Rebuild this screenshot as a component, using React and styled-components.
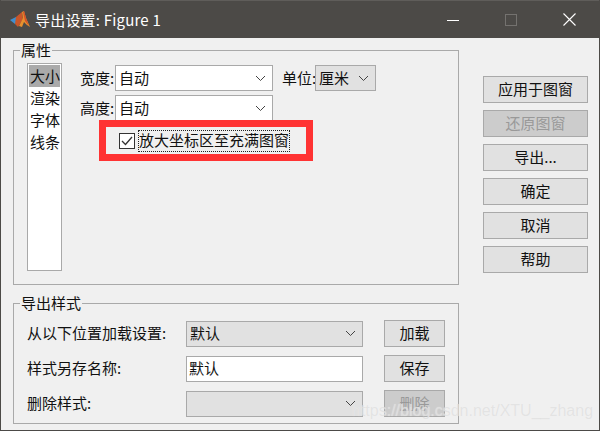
import React from "react";
import styled, { createGlobalStyle } from "styled-components";

const GlobalStyle = createGlobalStyle`
  html, body {
    margin: 0;
    padding: 0;
    background: #f0f0f0;
  }
  * {
    box-sizing: border-box;
  }
`;

const Window = styled.div`
  position: relative;
  width: 600px;
  height: 431px;
  background: #f0f0f0;
  border: 1px solid #4c4a47;
  border-top: 0;
  color: #111;
  font-family: "Noto Sans CJK SC", "Liberation Sans", sans-serif;
  font-size: 15px;
  overflow: hidden;
`;

const TitleBar = styled.div`
  height: 38px;
  margin: 0 -1px;
  background: #4c4a47;
  display: flex;
  align-items: center;
  color: #fff;
  padding: 0 2px 0 10px;
  border-top: 1px solid #5f5d5a;
`;

const TitleText = styled.span`
  margin-left: 5px;
  font-size: 15px;
  letter-spacing: 0.2px;
`;

const WindowButtons = styled.div`
  margin-left: auto;
  display: flex;
  align-items: center;
`;

const WindowButton = styled.div`
  width: 58px;
  display: flex;
  justify-content: center;
  align-items: center;
`;

const Body = styled.div`
  display: flex;
  padding: 2px 11px 0 12px;
`;

const LeftColumn = styled.div`
  width: 446px;
  display: flex;
  flex-direction: column;
  gap: 8px;
`;

const Group = styled.fieldset`
  margin: 0;
  padding: 0;
  height: ${(p) => p.$height}px;
  border: 1px solid #a9a9a9;
  min-width: 0;
`;

const Legend = styled.legend`
  margin-left: 6px;
  padding: 0 1px;
  font-size: 15px;
  line-height: 20px;
`;

const PropsRow = styled.div`
  display: flex;
  padding: 3px 0 0 13px;
`;

const ListBox = styled.div`
  width: 35px;
  height: 208px;
  background: #fff;
  border: 1px solid #a9a9a9;
  padding: 1px;
  display: flex;
  flex-direction: column;
`;

const ListItem = styled.div`
  height: 22px;
  line-height: 22px;
  font-size: 15px;
  padding-left: 1px;
  white-space: nowrap;
  background: ${(p) => (p.$selected ? "#aaaaaa" : "transparent")};
`;

const Fields = styled.div`
  margin-left: 18px;
  padding-top: 2px;
  display: flex;
  flex-direction: column;
  gap: 4px;
`;

const FieldRow = styled.div`
  display: flex;
  align-items: center;
`;

const Label = styled.span`
  white-space: nowrap;
  padding-bottom: 2px;
  width: ${(p) => (p.$width ? `${p.$width}px` : "auto")};
`;

const Combo = styled.div`
  width: ${(p) => p.$width}px;
  height: 26px;
  flex: none;
  display: flex;
  align-items: center;
  padding: 0 6px 2px 3px;
  border: 1px solid #a9a9a9;
  background: ${(p) => (p.$flat ? "#e1e1e1" : "#fff")};
  white-space: nowrap;
`;

const Arrow = styled.svg`
  margin-left: auto;
  margin-top: 2px;
  width: 11px;
  height: 7px;
  flex: none;
`;

const UnitLabel = styled(Label)`
  margin-left: 9px;
`;

const CheckRow = styled.div`
  margin: 6px 0 0 39px;
  display: flex;
  align-items: center;
`;

const CheckBox = styled.div`
  width: 16px;
  height: 16px;
  border: 1px solid #333;
  background: #fff;
  display: flex;
  align-items: center;
  justify-content: center;
`;

const CheckLabel = styled.span`
  margin-left: 4px;
  line-height: 18px;
  height: 20px;
  outline: 1px dotted #222;
  white-space: nowrap;
`;

const RedFrame = styled.div`
  position: absolute;
  left: 98px;
  top: 120px;
  width: 214px;
  height: 41px;
  border: 7px solid #ff3333;
  pointer-events: none;
`;

const StyleGrid = styled.div`
  display: grid;
  grid-template-columns: 159px 177px 82px;
  row-gap: 8px;
  padding: 7px 0 0 13px;
  align-items: center;
`;

const RowButton = styled.div`
  margin-left: 21px;
  width: 61px;
  height: 27px;
  display: flex;
  align-items: center;
  justify-content: center;
  padding-bottom: 2px;
  border: 1px solid #a9a9a9;
  background: ${(p) => (p.$disabled ? "#cccccc" : "#e1e1e1")};
  color: ${(p) => (p.$disabled ? "#999" : "#111")};
`;

const TextInput = styled.div`
  height: 26px;
  border: 1px solid #a9a9a9;
  background: #fff;
  padding: 0 0 2px 2px;
  display: flex;
  align-items: center;
`;

const RightColumn = styled.div`
  margin-left: 24px;
  padding-top: 36px;
  display: flex;
  flex-direction: column;
  gap: 7px;
`;

const SideButton = styled.div`
  width: 105px;
  height: 27px;
  display: flex;
  align-items: center;
  justify-content: center;
  padding-bottom: 2px;
  border: 1px solid #a9a9a9;
  background: ${(p) => (p.$disabled ? "#cccccc" : "#e1e1e1")};
  color: ${(p) => (p.$disabled ? "#999" : "#111")};
`;

const Watermark = styled.div`
  position: absolute;
  left: 351px;
  top: 399px;
  font-family: "Liberation Sans", sans-serif;
  font-size: 16px;
  line-height: 24px;
  color: rgba(222, 222, 222, 0.8);
  text-shadow: 0 0 1px rgba(255, 255, 255, 0.5);
  white-space: nowrap;
  pointer-events: none;
`;

const ChevronDown = () => (
  <Arrow viewBox="0 0 11 7">
    <path d="M1 1l4.5 4.5L10 1" fill="none" stroke="#444" strokeWidth="1" />
  </Arrow>
);

const MatlabLogo = () => (
  <svg width="20" height="20" viewBox="0 0 20 20">
    <path d="M0 10l6-3 3 3-4 4z" fill="#3f8fd0" />
    <path d="M6 7l6-5 1 7-5 8-3-3z" fill="#c8562a" />
    <path d="M12 2l2-1 2 7 4 9-3-2-3-3-2 5-3-1 4-8z" fill="#e8902c" />
    <path d="M13 2l1-1 2 7 3 8-4-5z" fill="#d4512a" />
  </svg>
);

const sideButtons = [
  { text: "应用于图窗" },
  { text: "还原图窗", disabled: true },
  { text: "导出..." },
  { text: "确定" },
  { text: "取消" },
  { text: "帮助" },
];

const App = () => {
  return (
    <>
      <GlobalStyle />
      <Window>
        <TitleBar>
          <MatlabLogo />
          <TitleText>导出设置: Figure 1</TitleText>
          <WindowButtons>
            <WindowButton>
              <svg width="12" height="12" viewBox="0 0 12 12">
                <path d="M0 6.5h12" stroke="#fff" strokeWidth="1" />
              </svg>
            </WindowButton>
            <WindowButton>
              <svg width="12" height="12" viewBox="0 0 12 12">
                <rect x="0.5" y="0.5" width="11" height="11" fill="none" stroke="#74726f" />
              </svg>
            </WindowButton>
            <WindowButton>
              <svg width="13" height="13" viewBox="0 0 13 13">
                <path d="M0.5 0.5l12 12M12.5 0.5l-12 12" stroke="#fff" strokeWidth="1.1" />
              </svg>
            </WindowButton>
          </WindowButtons>
        </TitleBar>
        <Body>
          <LeftColumn>
            <Group $height={245}>
              <Legend>属性</Legend>
              <PropsRow>
                <ListBox>
                  <ListItem $selected>大小</ListItem>
                  <ListItem>渲染</ListItem>
                  <ListItem>字体</ListItem>
                  <ListItem>线条</ListItem>
                </ListBox>
                <Fields>
                  <FieldRow>
                    <Label $width={35}>宽度:</Label>
                    <Combo $width={158}>
                      自动
                      <ChevronDown />
                    </Combo>
                    <UnitLabel $width={33}>单位:</UnitLabel>
                    <Combo $width={61} $flat>
                      厘米
                      <ChevronDown />
                    </Combo>
                  </FieldRow>
                  <FieldRow>
                    <Label $width={35}>高度:</Label>
                    <Combo $width={158}>
                      自动
                      <ChevronDown />
                    </Combo>
                  </FieldRow>
                  <CheckRow>
                    <CheckBox>
                      <svg width="12" height="10" viewBox="0 0 12 10">
                        <path d="M1 5l3.5 3.5L11 1" fill="none" stroke="#333" strokeWidth="1.3" />
                      </svg>
                    </CheckBox>
                    <CheckLabel>放大坐标区至充满图窗</CheckLabel>
                  </CheckRow>
                </Fields>
              </PropsRow>
            </Group>
            <Group $height={131}>
              <Legend>导出样式</Legend>
              <StyleGrid>
                <Label>从以下位置加载设置:</Label>
                <Combo $width={177} $flat>
                  默认
                  <ChevronDown />
                </Combo>
                <RowButton>加载</RowButton>
                <Label>样式另存名称:</Label>
                <TextInput>默认</TextInput>
                <RowButton>保存</RowButton>
                <Label>删除样式:</Label>
                <Combo $width={177} $flat>
                  <ChevronDown />
                </Combo>
                <RowButton $disabled>删除</RowButton>
              </StyleGrid>
            </Group>
          </LeftColumn>
          <RightColumn>
            {sideButtons.map((b) => (
              <SideButton key={b.text} $disabled={b.disabled}>
                {b.text}
              </SideButton>
            ))}
          </RightColumn>
        </Body>
        <RedFrame />
        <Watermark>https://blog.csdn.net/XTU__zhang</Watermark>
      </Window>
    </>
  );
};

export default App;
